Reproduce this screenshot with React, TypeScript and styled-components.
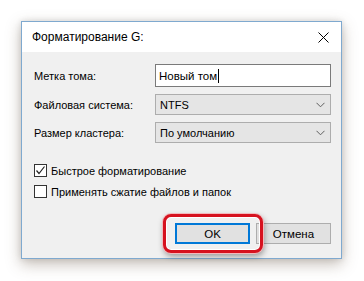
import React from "react";
import styled, { createGlobalStyle } from "styled-components";

const Global = createGlobalStyle`
  html, body { margin: 0; padding: 0; background: #ffffff; }
  body { font-family: "Liberation Sans", Arial, sans-serif; font-size: 11px; color: #000; }
`;

const Page = styled.div`
  width: 364px;
  height: 281px;
  padding: 21px 0 0 21px;
  box-sizing: border-box;
  background: #fff;
`;

const Dialog = styled.div`
  position: relative;
  width: 321px;
  height: 238px;
  box-sizing: border-box;
  border: 1px solid #7fa9cf;
  background: #f0f0f0;
  box-shadow: 0 5px 14px rgba(90, 70, 50, 0.35), 0 0 6px rgba(0, 0, 0, 0.12);
  display: flex;
  flex-direction: column;
`;

const TitleBar = styled.div`
  height: 30px;
  background: #fff;
  display: flex;
  align-items: center;
  justify-content: space-between;
  padding: 0 8px 0 10px;
  font-size: 12px;
`;

const CloseBtn = styled.div`
  width: 20px;
  height: 20px;
  display: flex;
  align-items: center;
  justify-content: center;
`;

const Body = styled.div`
  flex: 1;
  padding: 12px 10px 0 12px;
  display: flex;
  flex-direction: column;
  font-size: 11px;
`;

const FormGrid = styled.div`
  display: grid;
  grid-template-columns: 121px 176px;
  row-gap: 7px;
  align-items: center;
`;

const Label = styled.div``;

const TextBox = styled.div`
  height: 23px;
  box-sizing: border-box;
  border: 1px solid #7a7a7a;
  background: #fff;
  display: flex;
  align-items: center;
  padding-left: 3px;
  font-size: 11.5px;
`;

const Caret = styled.span`
  display: inline-block;
  width: 1px;
  height: 14px;
  background: #000;
  margin-left: 1px;
`;

const Select = styled.div`
  height: 21px;
  box-sizing: border-box;
  border: 1px solid #adadad;
  background: #e5e5e5;
  display: flex;
  align-items: center;
  justify-content: space-between;
  padding: 0 5px 0 4px;
`;

const Checks = styled.div`
  margin-top: 21px;
  display: flex;
  flex-direction: column;
  gap: 8px;
`;

const CheckRow = styled.div`
  display: flex;
  align-items: center;
  gap: 4px;
  height: 13px;
`;

const Box = styled.div`
  width: 13px;
  height: 13px;
  box-sizing: border-box;
  border: 1px solid #333;
  background: #fff;
  display: flex;
  align-items: center;
  justify-content: center;
`;

const Buttons = styled.div`
  margin-top: auto;
  margin-bottom: 14px;
  display: flex;
  justify-content: flex-end;
  gap: 6px;
`;

const Button = styled.div<{ $primary?: boolean }>`
  width: 75px;
  height: 21px;
  box-sizing: border-box;
  background: #e1e1e1;
  border: ${(p) => (p.$primary ? "2px solid #0078d7" : "1px solid #adadad")};
  display: flex;
  align-items: center;
  justify-content: center;
  font-size: 11.5px;
`;

const Highlight = styled.div`
  position: absolute;
  left: 141px;
  top: 192px;
  width: 100px;
  height: 39px;
  box-sizing: border-box;
  border: 3px solid #d6121f;
  border-radius: 8px;
  box-shadow: inset 0 0 0 1px #fff, 0 0 0 1px #f3b9bd, 1px 3px 6px rgba(0, 0, 0, 0.4);
  pointer-events: none;
`;

const Chevron = () => (
  <svg width="9" height="6" viewBox="0 0 9 6">
    <path d="M0.5 0.8 L4.5 4.8 L8.5 0.8" fill="none" stroke="#606060" strokeWidth="1" />
  </svg>
);

export default function App() {
  return (
    <Page>
      <Global />
      <Dialog>
        <TitleBar>
          <span>Форматирование G:</span>
          <CloseBtn>
            <svg width="11" height="11" viewBox="0 0 11 11">
              <path d="M0.5 0.5 L10.5 10.5 M10.5 0.5 L0.5 10.5" stroke="#000" strokeWidth="1" />
            </svg>
          </CloseBtn>
        </TitleBar>
        <Body>
          <FormGrid>
            <Label>Метка тома:</Label>
            <TextBox>
              Новый том<Caret />
            </TextBox>
            <Label>Файловая система:</Label>
            <Select>
              NTFS
              <Chevron />
            </Select>
            <Label>Размер кластера:</Label>
            <Select>
              По умолчанию
              <Chevron />
            </Select>
          </FormGrid>
          <Checks>
            <CheckRow>
              <Box>
                <svg width="11" height="11" viewBox="0 0 11 11">
                  <path d="M1.5 5.5 L4 8.5 L9.5 1.5" fill="none" stroke="#222" strokeWidth="1.2" />
                </svg>
              </Box>
              Быстрое форматирование
            </CheckRow>
            <CheckRow>
              <Box />
              Применять сжатие файлов и папок
            </CheckRow>
          </Checks>
          <Buttons>
            <Button $primary>OK</Button>
            <Button>Отмена</Button>
          </Buttons>
        </Body>
        <Highlight />
      </Dialog>
    </Page>
  );
}
